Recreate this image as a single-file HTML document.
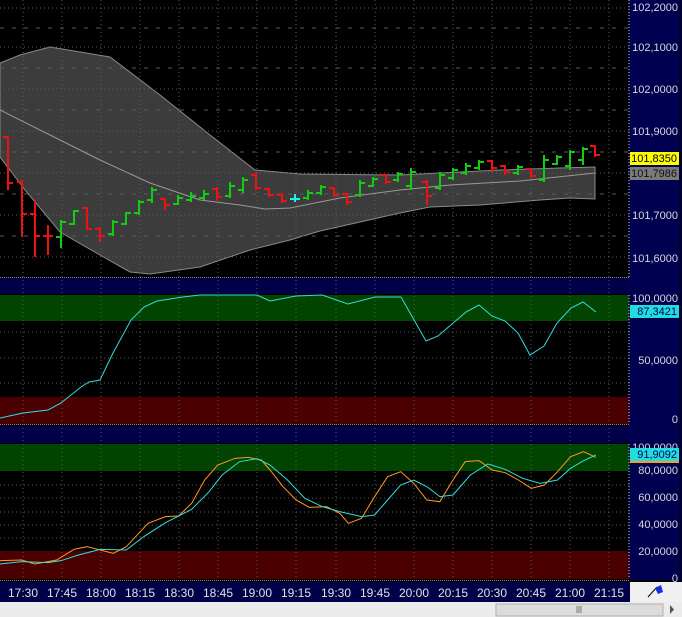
<!DOCTYPE html>
<html><head><style>
html,body{margin:0;padding:0;background:#000;}
body{width:682px;height:617px;overflow:hidden;position:relative;font-family:"Liberation Sans",sans-serif;}
svg{position:absolute;left:0;top:0;}
</style></head><body>
<svg width="682" height="617" viewBox="0 0 682 617" xmlns="http://www.w3.org/2000/svg">
<rect x="0" y="0" width="682" height="617" fill="#000"/>
<rect x="0" y="278" width="682" height="16" fill="#000048"/>
<rect x="0" y="426" width="682" height="17" fill="#000048"/>
<rect x="629" y="0" width="51" height="580" fill="#000050"/>
<rect x="679" y="0" width="3" height="617" fill="#000030"/>
<rect x="0" y="295" width="629" height="26" fill="#004400"/>
<rect x="0" y="397" width="629" height="27" fill="#4a0000"/>
<rect x="0" y="444" width="629" height="27" fill="#004400"/>
<rect x="0" y="551" width="629" height="28" fill="#4a0000"/>
<path d="M0,63 L20,55 L50,47 L110,57 L160,95 L210,135 L255,170 L300,174 L400,175 L500,170 L560,168 L595,167 L595,199 L570,198 L540,200 L480,205 L430,207 L400,213 L360,222 L320,231 L290,240 L250,250 L200,267 L150,274 L130,272 L100,255 L60,232 L25,190 L0,157 Z" fill="#3c3c3c" stroke="#8a8a8a" stroke-width="1"/>
<g stroke="#5a5a5a" stroke-width="1" stroke-dasharray="1,3">
<path d="M23,0V580M62,0V580M101,0V580M140,0V580M179,0V580M218,0V580M257,0V580M296,0V580M336,0V580M375,0V580M414,0V580M453,0V580M492,0V580M531,0V580M570,0V580M609,0V580"/>
<path d="M0,8H629M0,47H629M0,89H629M0,131H629M0,173H629M0,215H629M0,257H629"/>
<path d="M0,332H629M0,358H629M0,383H629M0,485H629M0,498H629M0,512H629M0,525H629M0,538H629"/>
</g>
<g stroke="#5a5a5a" stroke-width="1" stroke-dasharray="4,8">
<path d="M0,28H629M0,68H629M0,110H629M0,152H629M0,194H629M0,236H629"/>
</g>
<polyline points="0,110 50,135 100,160 150,183 200,200 240,205 265,209 290,208 340,198 400,190 450,185 520,181 595,173" fill="none" stroke="#999" stroke-width="1"/>
<g fill="none" stroke-width="2">
<path stroke="#ee1111" d="M8,137V190M3,137h5M8,183h5 M22,180V237M17,182h5M22,214h5 M35,200V257M30,214h5M35,236h5 M48,225V255M43,236h5M48,236h5 M87,207V230M82,208h5M87,229h5 M100,227V242M95,229h5M100,236h5 M165,198V210M160,199h5M165,205h5 M217,187V200M212,189h5M217,197h5 M256,173V190M251,175h5M256,188h5 M269,188V197M264,189h5M269,195h5 M282,193V203M277,195h5M282,201h5 M334,187V197M329,188h5M334,195h5 M347,193V205M342,194h5M347,202h5 M386,174V184M381,175h5M386,182h5 M427,180V205M422,182h5M427,196h5 M492,160V172M487,161h5M492,168h5 M505,165V175M500,166h5M505,172h5 M531,168V178M526,169h5M531,176h5 M595,145V157M590,146h5M595,155h5"/>
<path stroke="#11cc11" d="M61,220V248M56,237h5M61,222h5 M74,210V225M69,224h5M74,211h5 M113,220V236M108,234h5M113,222h5 M126,212V225M121,224h5M126,213h5 M139,200V215M134,213h5M139,202h5 M152,187V203M147,200h5M152,190h5 M178,195V205M173,204h5M178,198h5 M191,192V202M186,200h5M191,196h5 M204,190V200M199,198h5M204,194h5 M230,182V198M225,196h5M230,186h5 M243,177V193M238,190h5M243,180h5 M308,190V200M303,198h5M308,193h5 M321,185V195M316,193h5M321,187h5 M360,180V197M355,195h5M360,183h5 M373,177V187M368,186h5M373,179h5 M398,172V182M393,180h5M398,174h5 M411,168V190M406,186h5M411,172h5 M440,172V190M435,188h5M440,175h5 M453,168V180M448,178h5M453,170h5 M466,163V175M461,173h5M466,166h5 M479,160V170M474,168h5M479,162h5 M518,165V175M513,173h5M518,167h5 M544,155V182M539,180h5M544,160h5 M557,155V165M552,164h5M557,157h5 M570,150V170M565,166h5M570,152h5 M583,147V165M578,160h5M583,149h5"/>
<path stroke="#22eeee" d="M295,194V202M290,199h10"/>
</g>
<polyline points="0,418 23,413 48,410 61,403 81,387 89,382 100,380 113,353 131,320 144,307 157,301 183,297 200,295 257,295 270,301 296,296 322,295 348,304 375,297 401,297 426,341 438,336 466,312 479,305 492,316 505,321 518,333 530,355 544,346 557,323 571,308 583,302 596,312" fill="none" stroke="#33dddd" stroke-width="1"/>
<g transform="translate(0,270) scale(0.43554,0.33333)">
<polyline vector-effect="non-scaling-stroke" points="0,872 50,870 80,882 130,870 170,838 200,830 230,840 260,850 290,830 340,760 380,740 410,738 440,700 470,630 500,585 540,565 570,562 600,570 620,600 650,650 680,690 710,712 750,710 780,730 800,760 830,745 860,680 890,620 920,605 950,640 980,690 1010,695 1040,630 1068,575 1100,572 1130,600 1160,608 1190,630 1220,655 1250,645 1280,605 1310,560 1340,545 1368,562" fill="none" stroke="#ff9922" stroke-width="1"/>
<polyline vector-effect="non-scaling-stroke" points="0,882 50,875 110,878 140,872 180,855 230,838 290,840 330,800 380,758 440,718 480,665 510,615 550,575 590,566 620,585 660,630 700,685 740,710 780,725 830,740 860,735 890,690 920,645 950,630 980,650 1010,680 1040,675 1080,615 1120,582 1160,598 1200,625 1240,640 1280,630 1310,595 1340,572 1368,555" fill="none" stroke="#33dddd" stroke-width="1"/>
</g>
<g stroke="#ccc" stroke-width="1" stroke-dasharray="1,2">
<path d="M629,0V277M629,295V424M629,444V579"/>
</g>
<path d="M0,277.5H629M0,424.5H629M0,580.5H629" stroke="#888" stroke-dasharray="1,1"/>
<g fill="#d8d8d8" font-size="11" text-anchor="end" font-family="Liberation Sans, sans-serif">
<text x="678" y="11">102,2000</text>
<text x="678" y="51">102,1000</text>
<text x="678" y="93">102,0000</text>
<text x="678" y="135">101,9000</text>
<text x="678" y="219">101,7000</text>
<text x="678" y="262">101,6000</text>
<text x="678" y="302">100,0000</text>
<text x="678" y="364">50,0000</text>
<text x="678" y="423">0</text>
<text x="678" y="451">100,0000</text>
<text x="678" y="474">80,0000</text>
<text x="678" y="501">60,0000</text>
<text x="678" y="528">40,0000</text>
<text x="678" y="555">20,0000</text>
<text x="678" y="582">0</text>
</g>
<rect x="630" y="152" width="49" height="13" fill="#ffff00"/>
<text x="677" y="162" fill="#000" font-size="11" text-anchor="end">101,8350</text>
<rect x="630" y="167" width="49" height="13" fill="#7a7a7a"/>
<text x="677" y="177" fill="#111" font-size="11" text-anchor="end">101,7986</text>
<rect x="630" y="305" width="49" height="13" fill="#22dddd"/>
<text x="677" y="315" fill="#000060" font-size="11" text-anchor="end">87,3421</text>
<rect x="630" y="448" width="49" height="13" fill="#22dddd"/>
<rect x="630" y="461" width="49" height="2" fill="#ff9922"/>
<text x="677" y="458" fill="#000060" font-size="11" text-anchor="end">91,9092</text>
<rect x="0" y="582" width="630" height="20" fill="#000048"/>
<rect x="630" y="582" width="52" height="20" fill="#f0f0f0"/>
<g fill="#e0e0e0" font-size="12" text-anchor="middle">
<text x="23" y="597">17:30</text><text x="62" y="597">17:45</text><text x="101" y="597">18:00</text><text x="140" y="597">18:15</text><text x="179" y="597">18:30</text><text x="218" y="597">18:45</text><text x="257" y="597">19:00</text><text x="296" y="597">19:15</text><text x="336" y="597">19:30</text><text x="375" y="597">19:45</text><text x="414" y="597">20:00</text><text x="453" y="597">20:15</text><text x="492" y="597">20:30</text><text x="531" y="597">20:45</text><text x="570" y="597">21:00</text><text x="609" y="597">21:15</text>
</g>
<path d="M648,597 L657,587" stroke="#000" stroke-width="1"/>
<path d="M655,588 L661,585 L663,592 L658,594 Z" fill="#1133dd"/>
<rect x="0" y="602" width="682" height="15" fill="#ececec"/>
<rect x="496" y="604" width="167" height="12" fill="#dcdcdc" stroke="#b0b0b0"/>
<path d="M577,606V613M579,606V613M581,606V613" stroke="#777"/>
<path d="M670,605 L674,609.5 L670,614 Z" fill="#555"/>
</svg>
</body></html>
